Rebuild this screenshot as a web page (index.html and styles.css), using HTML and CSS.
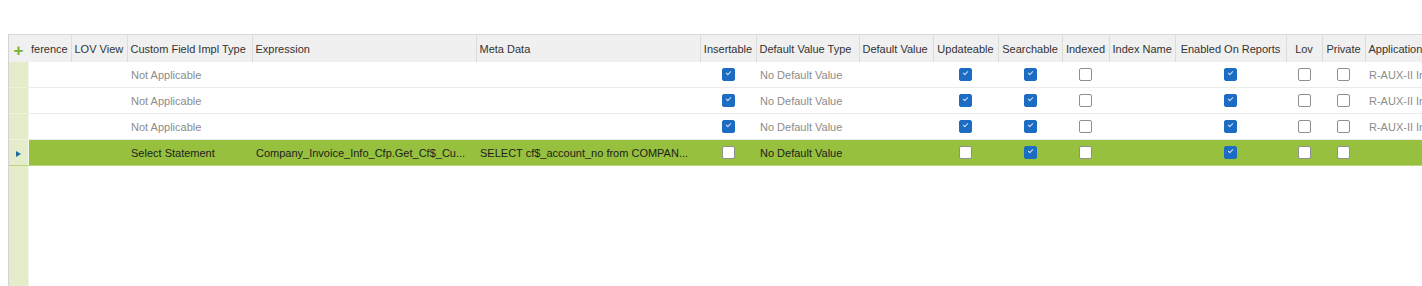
FILE: index.html
```html
<!DOCTYPE html>
<html lang="en">
<head>
  <meta charset="UTF-8" />
  <title>Custom Fields</title>
  <link rel="stylesheet" href="styles.css">
</head>
<body>
  <div class="grid">
    <table>
      <colgroup>
        <col style="width:19px"><col style="width:43px"><col style="width:56px"><col style="width:125px">
        <col style="width:224px"><col style="width:224px"><col style="width:56px"><col style="width:103px">
        <col style="width:74px"><col style="width:65px"><col style="width:64px"><col style="width:47px">
        <col style="width:66px"><col style="width:111px"><col style="width:36px"><col style="width:43px">
        <col style="width:100px">
      </colgroup>
      <thead>
        <tr>
          <th class="gutter"><span class="plus">+</span></th>
          <th>ference</th>
          <th>LOV View</th>
          <th>Custom Field Impl Type</th>
          <th>Expression</th>
          <th>Meta Data</th>
          <th class="c">Insertable</th>
          <th>Default Value Type</th>
          <th>Default Value</th>
          <th class="c">Updateable</th>
          <th class="c">Searchable</th>
          <th class="c">Indexed</th>
          <th>Index Name</th>
          <th class="c">Enabled On Reports</th>
          <th class="c">Lov</th>
          <th class="c">Private</th>
          <th>Application</th>
        </tr>
      </thead>
      <tbody>
        <tr>
          <td class="gutter"></td><td></td><td></td><td>Not Applicable</td><td></td><td></td>
          <td class="c"><span class="cb on"></span></td><td>No Default Value</td><td></td>
          <td class="c"><span class="cb on"></span></td><td class="c"><span class="cb on"></span></td>
          <td class="c"><span class="cb"></span></td><td></td><td class="c"><span class="cb on"></span></td>
          <td class="c"><span class="cb"></span></td><td class="c"><span class="cb"></span></td><td>R-AUX-II In</td>
        </tr>
        <tr>
          <td class="gutter"></td><td></td><td></td><td>Not Applicable</td><td></td><td></td>
          <td class="c"><span class="cb on"></span></td><td>No Default Value</td><td></td>
          <td class="c"><span class="cb on"></span></td><td class="c"><span class="cb on"></span></td>
          <td class="c"><span class="cb"></span></td><td></td><td class="c"><span class="cb on"></span></td>
          <td class="c"><span class="cb"></span></td><td class="c"><span class="cb"></span></td><td>R-AUX-II In</td>
        </tr>
        <tr>
          <td class="gutter"></td><td></td><td></td><td>Not Applicable</td><td></td><td></td>
          <td class="c"><span class="cb on"></span></td><td>No Default Value</td><td></td>
          <td class="c"><span class="cb on"></span></td><td class="c"><span class="cb on"></span></td>
          <td class="c"><span class="cb"></span></td><td></td><td class="c"><span class="cb on"></span></td>
          <td class="c"><span class="cb"></span></td><td class="c"><span class="cb"></span></td><td>R-AUX-II In</td>
        </tr>
        <tr class="selected">
          <td class="gutter"><span class="arrow"></span></td><td></td><td></td><td>Select Statement</td>
          <td>Company_Invoice_Info_Cfp.Get_Cf$_Cu...</td><td>SELECT cf$_account_no from COMPAN...</td>
          <td class="c"><span class="cb"></span></td><td>No Default Value</td><td></td>
          <td class="c"><span class="cb"></span></td><td class="c"><span class="cb on"></span></td>
          <td class="c"><span class="cb"></span></td><td></td><td class="c"><span class="cb on"></span></td>
          <td class="c"><span class="cb"></span></td><td class="c"><span class="cb"></span></td><td></td>
        </tr>
      </tbody>
    </table>
    <div class="filler"><div class="filler-gutter"></div></div>
  </div>
</body>
</html>
```

FILE: styles.css
```css
html, body {
  margin: 0;
  height: 100%;
  overflow: hidden;
  background: white;
}
body {
  font-family: "Liberation Sans", Arial, sans-serif;
  font-size: 11px;
  color: #333;
}
.grid {
  margin: 34px 0 0 8px;
  height: 252px;
  border-left: 1px solid #d4d4d4;
  border-top: 1px solid #d8d8d8;
  display: flex;
  flex-direction: column;
  overflow: hidden;
}
table {
  table-layout: fixed;
  border-collapse: collapse;
  width: 1456px;
  flex: none;
}
th {
  height: 27px;
  padding: 0 3px;
  background: #f0f0f0;
  border-right: 1px solid #dcdcdc;
  font-weight: normal;
  text-align: left;
  white-space: nowrap;
  overflow: hidden;
  color: #333;
}
td {
  height: 25px;
  padding: 0 4px;
  border-bottom: 1px solid #ebebeb;
  white-space: nowrap;
  overflow: hidden;
  color: #8c8c8c;
}
th.c, td.c {
  text-align: center;
  padding: 0;
}
th.gutter {
  padding: 0;
  text-align: center;
  border-right: none;
}
td.gutter {
  background: #e4ecca;
  border-bottom: 1px solid #edf2dc;
  border-right: 1px solid #f3f6ea;
  padding: 0;
  text-align: center;
}
.plus {
  color: #7ab32e;
  font-size: 17px;
  font-weight: bold;
  line-height: 1;
  position: relative;
  top: 2px;
}
.arrow {
  display: inline-block;
  width: 0;
  height: 0;
  border-top: 3px solid transparent;
  border-bottom: 3px solid transparent;
  border-left: 5px solid #1a6e9c;
}
tr.selected td {
  background: #96c03d;
  color: #1e1e1e;
  border-bottom: 1px solid #b9d67e;
}
tr.selected td.gutter {
  background: #e4ecca;
}
.cb {
  display: inline-block;
  width: 11px;
  height: 11px;
  border: 1px solid #8f8f8f;
  border-radius: 2px;
  background: white;
  vertical-align: middle;
  position: relative;
}
.cb.on {
  background: #1c6cc4;
  border-color: #1c6cc4;
}
.cb.on::after {
  content: "";
  position: absolute;
  left: 3px;
  top: 2px;
  width: 4px;
  height: 2px;
  border-left: 1px solid #cfe0f5;
  border-bottom: 1px solid #cfe0f5;
  transform: rotate(-45deg);
}
.filler {
  flex: 1;
  display: flex;
}
.filler-gutter {
  width: 19px;
  background: #e4ecca;
  border-right: 1px solid #f3f6ea;
}
```
